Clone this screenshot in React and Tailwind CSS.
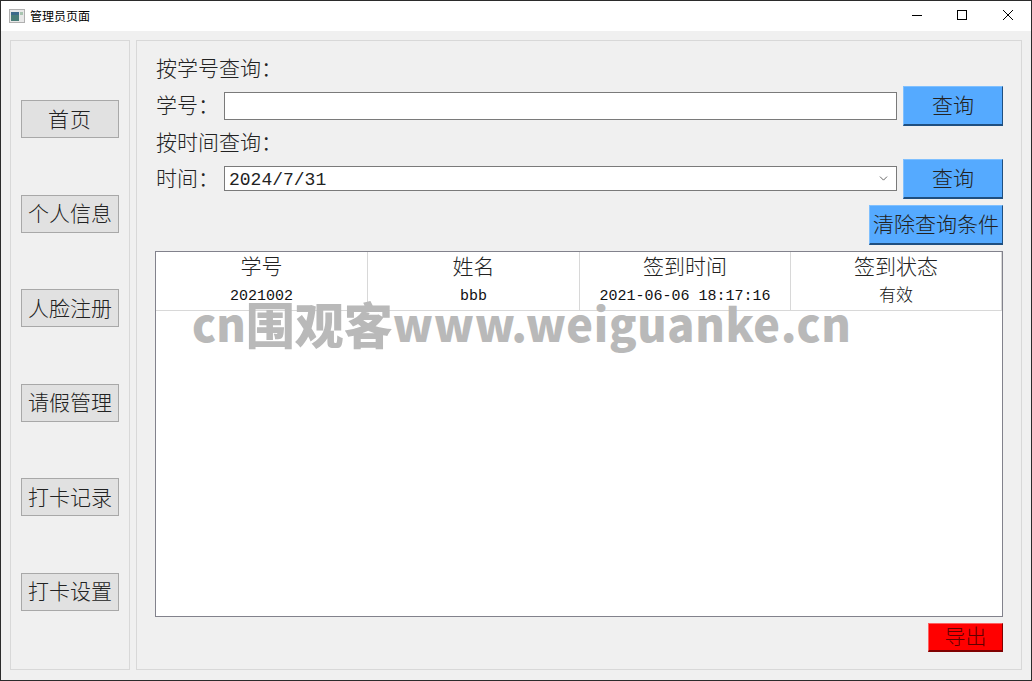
import { ChevronDown } from "lucide-react";

const cjk = "font-['Liberation_Mono','Noto_Sans_CJK_SC',monospace]";

const navItems = ["首页", "个人信息", "人脸注册", "请假管理", "打卡记录", "打卡设置"];

const columns = [
  { head: "学号", val: "2021002", size: "text-[15px]" },
  { head: "姓名", val: "bbb", size: "text-[15px]" },
  { head: "签到时间", val: "2021-06-06 18:17:16", size: "text-[15px]" },
  { head: "签到状态", val: "有效", size: "text-[17px]" },
];

const blueBtn =
  "flex items-center justify-center pt-[3px] bg-[#55aaff] border-t border-l border-t-[#7fc0ff] border-l-[#7fc0ff] border-r border-b-2 border-r-[#1f4f80] border-b-[#1f4f80] text-[21px] font-light text-[#222] leading-none";

const labelText = "pl-[1px] pt-[3px] text-[21px] font-light text-[#222] leading-none";

function NavButton({ label }) {
  return (
    <div
      className={`h-[38px] flex items-center justify-center pt-[4px] bg-[#e1e1e1] border border-[#a8a8a8] text-[21px] font-light text-[#222] leading-none ${
        label.length === 2 ? "tracking-[1px]" : ""
      }`}
    >
      {label}
    </div>
  );
}

export default function App() {
  return (
    <div
      className={`w-[1032px] h-[681px] bg-[#f0f0f0] border border-[#2b2b2b] overflow-hidden relative flex flex-col ${cjk}`}
    >
      {/* title bar */}
      <div className="h-[30px] bg-white flex items-center shrink-0">
        <svg width="16" height="14" viewBox="0 0 16 14" className="ml-[8px]">
          <rect x="0.5" y="0.5" width="15" height="13" fill="#e8e8e8" stroke="#b0b0b0" />
          <rect x="2" y="3" width="8" height="9" fill="#4a7d78" />
          <rect x="2" y="3" width="8" height="3" fill="#3d6a8a" />
          <rect x="11" y="3" width="3" height="3" fill="#a8c4b0" />
        </svg>
        <span className="ml-[5px] text-[12px] text-black font-['Noto_Sans_CJK_SC',sans-serif]">管理员页面</span>
        <div className="ml-auto flex items-center text-black">
          <svg width="46" height="30" viewBox="0 0 46 30">
            <path d="M19 14.5h10" stroke="#000" strokeWidth="1" />
          </svg>
          <svg width="46" height="30" viewBox="0 0 46 30">
            <rect x="18.5" y="9.5" width="9" height="9" fill="none" stroke="#000" strokeWidth="1" />
          </svg>
          <svg width="46" height="30" viewBox="0 0 46 30">
            <path d="M18 9l10 10M28 9l-10 10" stroke="#000" strokeWidth="1" />
          </svg>
        </div>
      </div>

      {/* body */}
      <div className="flex-1 flex pt-[9px] pl-[9px] pr-[9px] pb-[10px] gap-[6px]">
        {/* sidebar */}
        <div className="w-[120px] border border-[#d8d8d8] pt-[59px] pb-[58px] px-[10px] flex flex-col justify-between">
          {navItems.map((n) => (
            <NavButton key={n} label={n} />
          ))}
        </div>

        {/* main panel */}
        <div className="flex-1 border border-[#d8d8d8] px-[18px] pt-[14px] flex flex-col">
          <div className={`h-[28px] flex items-center ${labelText}`}>按学号查询：</div>

          <div className="h-[40px] mt-[3px] flex items-center">
            <span className={`w-[69px] ${labelText}`}>学号：</span>
            <div className="w-[673px] h-[28px] bg-white border border-[#7a7a7a]" />
            <div className={`w-[100px] h-[40px] ml-[6px] ${blueBtn}`}>查询</div>
          </div>

          <div className={`h-[28px] mt-[3px] flex items-center ${labelText}`}>按时间查询：</div>

          <div className="h-[40px] mt-[2px] flex items-center">
            <span className={`w-[69px] ${labelText}`}>时间：</span>
            <div className="w-[673px] h-[25px] mb-[1px] bg-white border border-[#7a7a7a] flex items-center pl-[4px] pr-[6px]">
              <span className="pt-[3px] text-[18px] text-[#222] leading-none">2024/7/31</span>
              <ChevronDown className="ml-auto text-[#444]" size={13} strokeWidth={1.5} />
            </div>
            <div className={`w-[100px] h-[40px] ml-[6px] ${blueBtn}`}>查询</div>
          </div>

          <div className="flex justify-end mt-[6px]">
            <div className={`w-[134px] h-[40px] ${blueBtn}`}>清除查询条件</div>
          </div>

          {/* table */}
          <div className="h-[366px] mt-[6px] bg-white border border-[#82828c]">
            <div className="grid grid-cols-[212px_212px_211px_211px] h-[59px] border-b border-[#d8d8d8]">
              {columns.map((c) => (
                <div key={c.head} className="border-r border-[#d8d8d8] flex flex-col items-center">
                  <div className="h-[30px] pt-[3px] flex items-center text-[21px] font-light text-[#222] leading-none">{c.head}</div>
                  <div className={`h-[28px] pt-[1px] flex items-center font-light text-[#111] leading-none ${c.size}`}>{c.val}</div>
                </div>
              ))}
            </div>
          </div>

          <div className="flex justify-end mt-[6px]">
            <div className="w-[75px] h-[29px] flex items-center justify-center pt-[3px] bg-[#ff0000] border-t border-l border-t-[#ff6060] border-l-[#ff6060] border-r border-b-2 border-r-[#800000] border-b-[#800000] text-[21px] font-light text-[#600000] leading-none">
              导出
            </div>
          </div>
        </div>
      </div>

      {/* watermark */}
      <div className="absolute left-[191px] top-[303px] flex items-center h-[38px] font-black text-[#b9b9b9] whitespace-nowrap font-['Noto_Sans_CJK_SC',sans-serif] leading-[38px]">
        <span className="text-[45px]">cn</span>
        <span className="text-[49px]">围观客</span>
        <span className="text-[45px] tracking-[0.65px]">www.weiguanke.cn</span>
      </div>
    </div>
  );
}
